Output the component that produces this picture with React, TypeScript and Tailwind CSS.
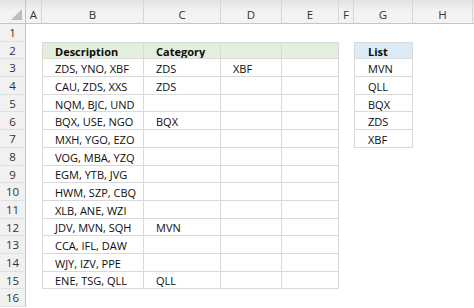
import React from "react";

const COLS = ["A", "B", "C", "D", "E", "F", "G", "H"];

const rows: Record<number, { b: string; c?: string; d?: string }> = {
  3: { b: "ZDS, YNO, XBF", c: "ZDS", d: "XBF" },
  4: { b: "CAU, ZDS, XXS", c: "ZDS" },
  5: { b: "NQM, BJC, UND" },
  6: { b: "BQX, USE, NGO", c: "BQX" },
  7: { b: "MXH, YGO, EZO" },
  8: { b: "VOG, MBA, YZQ" },
  9: { b: "EGM, YTB, JVG" },
  10: { b: "HWM, SZP, CBQ" },
  11: { b: "XLB, ANE, WZI" },
  12: { b: "JDV, MVN, SQH", c: "MVN" },
  13: { b: "CCA, IFL, DAW" },
  14: { b: "WJY, IZV, PPE" },
  15: { b: "ENE, TSG, QLL", c: "QLL" },
};

const list = ["MVN", "QLL", "BQX", "ZDS", "XBF"];

const B = "border-[#d9d9d9]";

function Cell({
  children,
  className = "",
}: {
  children?: React.ReactNode;
  className?: string;
}) {
  return (
    <div
      className={`flex items-center pt-[2px] pl-[12px] whitespace-nowrap overflow-hidden text-[11px] leading-none text-[#0d0d0d] ${className}`}
    >
      {children}
    </div>
  );
}

function tableCell(r: number, col: string): { cls: string; text?: string } {
  // Table B2:E15
  if (r >= 2 && r <= 15 && ["B", "C", "D", "E"].includes(col)) {
    let cls = `border-r border-b ${B}`;
    if (col === "B") cls += " border-l";
    if (r === 2) cls += " border-t bg-[#e2efda] font-bold";
    let text: string | undefined;
    if (r === 2) {
      if (col === "B") text = "Description";
      if (col === "C") text = "Category";
    } else {
      const row = rows[r];
      if (col === "B") text = row.b;
      if (col === "C") text = row.c;
      if (col === "D") text = row.d;
    }
    return { cls, text };
  }
  // List G2:G7
  if (col === "G" && r >= 2 && r <= 7) {
    let cls = `border-l border-r border-b ${B} pl-[13px]`;
    if (r === 2) cls += " border-t bg-[#ddebf7] font-bold";
    return { cls, text: r === 2 ? "List" : list[r - 3] };
  }
  return { cls: "" };
}

export default function App() {
  const rowNums = Array.from({ length: 16 }, (_, i) => i + 1);
  return (
    <div
      className="w-[474px] h-[308px] overflow-hidden bg-white"
      style={{ fontFamily: '"Open Sans", "Noto Sans", sans-serif' }}
    >
      <div className="grid grid-cols-[26px_16px_102px_77px_61px_57px_15px_59px_60px_1fr] grid-rows-[24px_repeat(16,17.7px)]">
        {/* corner */}
        <div className="relative border-r border-b border-[#c4c4c4] bg-gradient-to-b from-[#e2e2e2] to-[#f3f3f3] to-50%">
          <svg
            className="absolute left-0 top-0"
            width="26"
            height="24"
            viewBox="0 0 26 24"
          >
            <polygon points="22,9 22,20 11,20" fill="#bdbdbd" />
          </svg>
        </div>
        {COLS.map((c) => (
          <div
            key={c}
            className="flex items-center justify-center pt-[6px] border-r border-b border-r-[#d6d6d6] border-b-[#c4c4c4] bg-gradient-to-b from-[#e2e2e2] to-[#f3f3f3] to-50% text-[11.5px] leading-none text-[#333]"
          >
            {c}
          </div>
        ))}
        <div className="border-b border-[#c4c4c4] bg-gradient-to-b from-[#e2e2e2] to-[#f3f3f3] to-50%" />

        {rowNums.map((r) => (
          <React.Fragment key={r}>
            <div className="flex items-center justify-center pt-[1px] border-r border-b border-r-[#c4c4c4] border-b-[#e0e0e0] bg-[#f1f1f1] text-[11.5px] leading-none text-[#333]">
              {r}
            </div>
            {COLS.map((c) => {
              const { cls, text } = tableCell(r, c);
              return (
                <Cell key={c} className={cls}>
                  {text}
                </Cell>
              );
            })}
            <div />
          </React.Fragment>
        ))}
      </div>
    </div>
  );
}
